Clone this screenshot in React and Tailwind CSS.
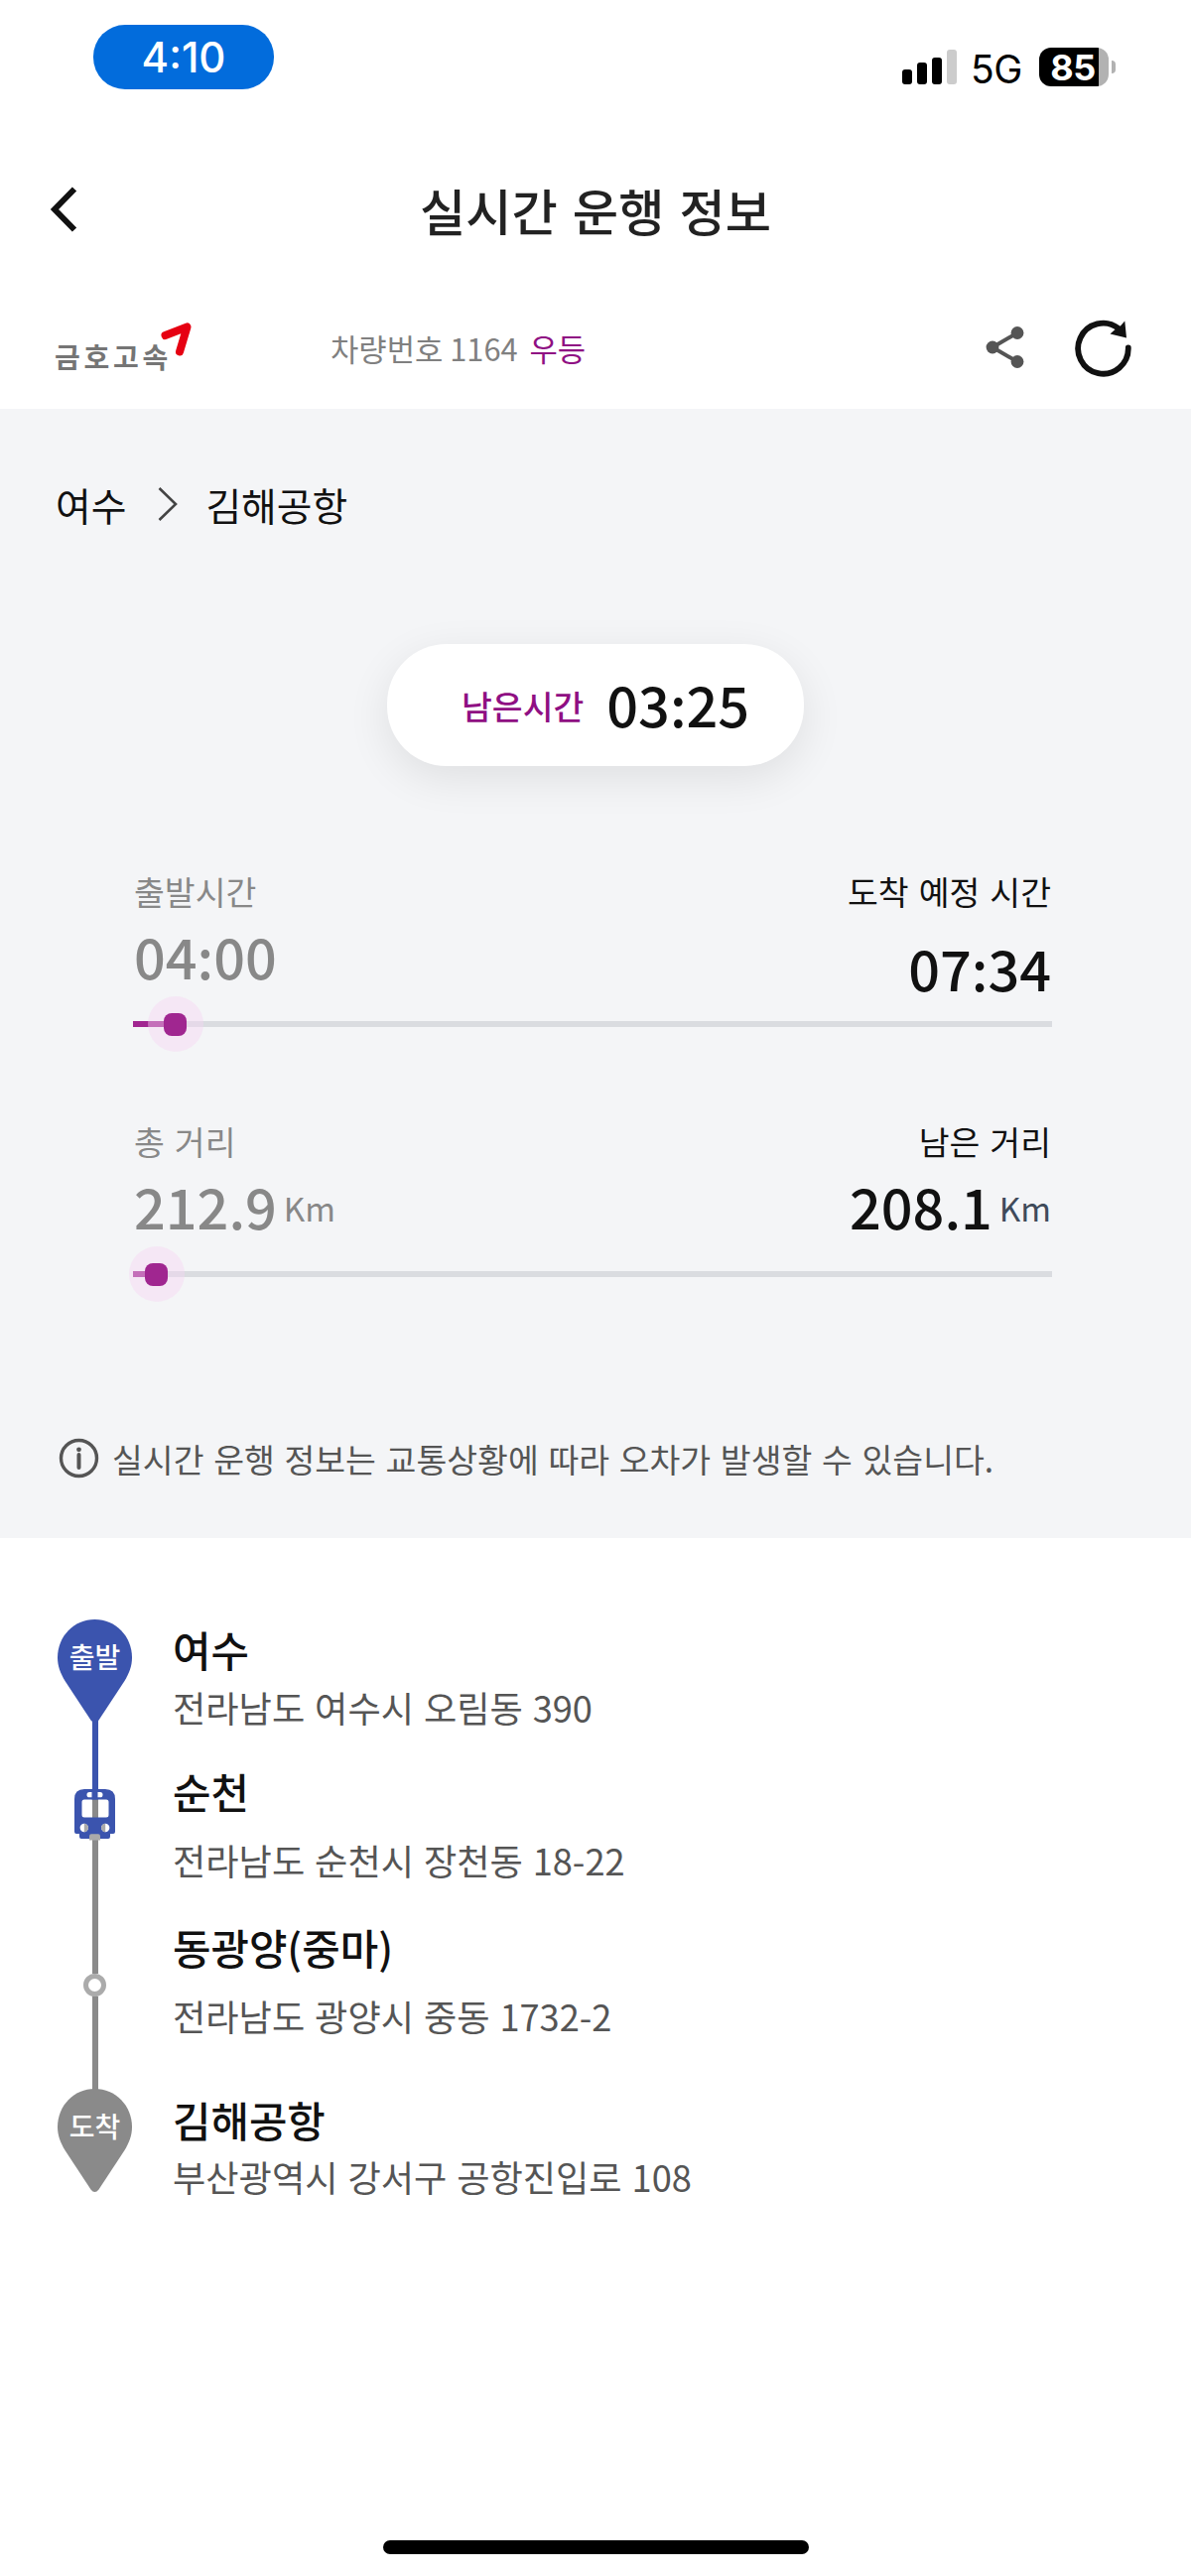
import React from 'react';

const stops = [
  { name: '여수', address: '전라남도 여수시 오림동 390' },
  { name: '순천', address: '전라남도 순천시 장천동 18-22' },
  { name: '동광양(중마)', address: '전라남도 광양시 중동 1732-2' },
  { name: '김해공항', address: '부산광역시 강서구 공항진입로 108' },
];

// Title/address spacing differs between terminals and stops on the way
const stopStyles = [
  'h-[143px] gap-[18px]',
  'h-[157px] gap-[29px]',
  'h-[174px] gap-[29px]',
  'h-[120px] gap-[17px]',
];

function StatusBar() {
  return (
    <div className="flex h-[148px] items-start justify-between pt-[25px] pl-[94px] pr-[76px] font-['Inter',sans-serif]">
      <div className="flex h-[65px] w-[182px] items-center justify-center rounded-[32px] bg-[#026cdc] text-[42px] leading-none font-medium text-white">
        4:10
      </div>
      <div className="mt-[23px] flex h-[39px] items-center">
        <div className="flex h-[37px] items-end gap-[5px] self-start">
          <span className="h-[15px] w-[10px] rounded-[3px] bg-black" />
          <span className="h-[22px] w-[10px] rounded-[3px] bg-black" />
          <span className="h-[27px] w-[10px] rounded-[3px] bg-black" />
          <span className="h-[35px] w-[10px] rounded-[3px] bg-[#cccccc]" />
        </div>
        <span className="mt-[3px] ml-[14px] w-[53px] text-[39px] leading-none tracking-[-0.5px] text-black">5G</span>
        <div className="ml-[16px] flex h-[39px] w-[70px] items-center justify-center rounded-[12px] bg-[linear-gradient(to_right,#000_60px,#b2b2b2_60px)] text-[36px] leading-none font-bold tracking-[-0.5px] text-white">
          <span className="mt-px mr-[2px]">85</span>
        </div>
        <span className="ml-[3px] h-[13px] w-[4px] rounded-r-full bg-[#b2b2b2]" />
      </div>
    </div>
  );
}

function TitleBar() {
  return (
    <div className="grid h-[125px] grid-cols-[1fr_auto_1fr] items-center px-[50px]">
      <button type="button" className="w-fit">
        <svg width="28" height="46" viewBox="0 0 28 46" fill="none" stroke="#111" strokeWidth="6">
          <path d="M25 2.5 L5 23 L25 43.5" />
        </svg>
      </button>
      <h1 className="mt-[2px] text-[50.3px] leading-none font-medium text-[#222] [word-spacing:0.075em]">
        실시간 운행 정보
      </h1>
    </div>
  );
}

function OperatorBar() {
  return (
    <div className="flex h-[139px] items-start pl-[55px] pr-[60px]">
      <div className="mt-[51px] flex items-start">
        <span className="mt-[21px] w-[109px] text-[28px] leading-none font-bold tracking-[3.7px] whitespace-nowrap text-[#757575]">
          금호고속
        </span>
        <svg className="-ml-[3px]" width="34" height="36" viewBox="0 0 34 36" fill="none">
          <path d="M5.5 14 L27.5 5.5 L20 30.5" stroke="#e60012" strokeWidth="8" strokeLinecap="round" strokeLinejoin="round" />
        </svg>
      </div>
      <p className="mt-[62px] ml-[138px] text-[30.8px] leading-[31px] text-[#808080]">
        차량번호 1164 <span className="ml-[5px] text-[#8f0f83]">우등</span>
      </p>
      <div className="mt-[46px] ml-auto flex items-center gap-[49px]">
        <svg width="40" height="44" viewBox="0 0 40 44" fill="#555">
          <path d="M32 7.5 L7 22 L32 36.5" fill="none" stroke="#555" strokeWidth="4" />
          <circle cx="32" cy="7.5" r="6.4" />
          <circle cx="7" cy="22" r="6.4" />
          <circle cx="32" cy="36.5" r="6.4" />
        </svg>
        <svg width="58" height="62" viewBox="0 0 58 62" fill="none">
          <path d="M54.8 31.5 A25.3 25.5 0 1 1 45 12" stroke="#111" strokeWidth="5.8" strokeLinecap="round" />
          <path d="M51.3 4.5 L53 21.5 L36.5 17.5 L41 13.5 L46 10.5 Z" fill="#111" />
        </svg>
      </div>
    </div>
  );
}

function ProgressTrack({ percent }) {
  return (
    <div className="relative h-[6px] bg-[#dadce0]">
      <div className="h-full bg-[#a02690]" style={{ width: `${percent}%` }} />
      <span
        className="absolute top-1/2 flex size-[56px] -translate-x-1/2 -translate-y-1/2 items-center justify-center rounded-full bg-[rgba(246,212,242,0.42)]"
        style={{ left: `${percent}%` }}
      >
        <span className="size-[23px] rounded-[8px] bg-[#a02690]" />
      </span>
    </div>
  );
}

function TripSummary() {
  return (
    <section className="flex h-[1138px] flex-col bg-[#f4f5f7] pt-[76px]">
      <div className="flex h-[40px] items-center pl-[56px] text-[38.8px] leading-none text-[#111]">
        <span>여수</span>
        <svg className="ml-[31px]" width="22" height="34" viewBox="0 0 22 34" fill="none" stroke="#444" strokeWidth="2.6">
          <path d="M2.5 1 L19 17 L2.5 33" />
        </svg>
        <span className="ml-[27px]">김해공항</span>
      </div>

      <div className="mx-auto mt-[121px] flex h-[123px] w-[420px] items-center rounded-[60px] bg-white pl-[75px] leading-none font-medium shadow-[0_12px_44px_rgba(0,0,0,0.09)]">
        <span className="text-[33.5px] text-[#8f0f83]">남은시간</span>
        <span className="mb-[3px] ml-[23px] text-[55.8px] text-[#111]">03:25</span>
      </div>

      <div className="mt-[109px] flex h-[148px] flex-col pr-[141px] pl-[135px] leading-none">
        <div className="flex justify-between">
          <div>
            <p className="text-[33.5px] text-[#888]">출발시간</p>
            <p className="mt-[20px] text-[55.8px] font-medium text-[#888]">04:00</p>
          </div>
          <div className="text-right text-[#111]">
            <p className="text-[33.5px] [word-spacing:0.075em]">도착 예정 시간</p>
            <p className="mt-[32px] text-[55.8px] font-medium">07:34</p>
          </div>
        </div>
      </div>
      <div className="pr-[140px] pl-[134px]">
        <ProgressTrack percent={4.62} />
      </div>

      <div className="mt-[98px] flex h-[148px] flex-col pr-[141px] pl-[135px] leading-none">
        <div className="flex justify-between">
          <div>
            <p className="text-[33.5px] text-[#888] [word-spacing:0.075em]">총 거리</p>
            <p className="mt-[20px] flex items-center text-[55.8px] font-medium text-[#888]">
              212.9<span className="mt-[4px] ml-[7px] text-[33.2px] font-normal">Km</span>
            </p>
          </div>
          <div className="text-right text-[#111]">
            <p className="text-[33.5px] [word-spacing:0.075em]">남은 거리</p>
            <p className="mt-[20px] flex items-center text-[55.8px] font-medium">
              208.1<span className="mt-[4px] ml-[7px] text-[33.2px] font-normal text-[#3f4a5a]">Km</span>
            </p>
          </div>
        </div>
      </div>
      <div className="pr-[140px] pl-[134px]">
        <ProgressTrack percent={2.59} />
      </div>

      <div className="mt-[162px] flex items-start pl-[59px] text-[#555]">
        <svg width="41" height="41" viewBox="0 0 41 41" fill="none" stroke="#555">
          <circle cx="20.5" cy="20.5" r="18" strokeWidth="3.4" />
          <path d="M20.5 17 V30" strokeWidth="4" strokeLinecap="round" />
          <circle cx="20.5" cy="11.8" r="2.4" fill="#555" stroke="none" />
        </svg>
        <p className="mt-[3px] ml-[13px] text-[33.5px] leading-[35px] [word-spacing:0.065em]">
          실시간 운행 정보는 교통상황에 따라 오차가 발생할 수 있습니다.
        </p>
      </div>
    </section>
  );
}

function Pin({ label, className }) {
  return (
    <div className={`relative h-[104px] w-[75px] ${className}`}>
      <svg width="75" height="104" viewBox="0 0 75 104" fill="currentColor">
        <path d="M37.5 0 C58.5 0 75 17 75 38.5 C75 47 72 54.5 67.5 62 L41.5 101.5 Q37.5 106.5 33.5 101.5 L7.5 62 C3 54.5 0 47 0 38.5 C0 17 16.5 0 37.5 0 Z" />
      </svg>
      <span className="absolute inset-x-0 top-[23px] text-center text-[28px] leading-none font-medium text-white">
        {label}
      </span>
    </div>
  );
}

function Train() {
  return (
    <svg className="absolute top-[171px] left-[17px]" width="41" height="52" viewBox="0 0 41 52">
      <path
        fill="#3b54ae"
        fillRule="evenodd"
        d="M10 0 H31 Q41 0 41 10 V43 Q41 45 39 45 H36 V48 Q36 50 34 50 H7 Q5 50 5 48 V45 H2 Q0 45 0 43 V10 Q0 0 10 0 Z M10 10.5 Q7.5 10.5 7.5 13 V26 Q7.5 28.5 10 28.5 H32 Q34.5 28.5 34.5 26 V13 Q34.5 10.5 32 10.5 Z"
      />
      <rect x="12.5" y="3" width="16" height="5.3" rx="2.6" fill="#fff" />
      <rect x="17.5" y="0" width="6" height="10.5" fill="#3b54ae" />
      <circle cx="9.8" cy="39" r="4.2" fill="#fff" />
      <path d="M9.8 34.8 A4.2 4.2 0 0 1 9.8 43.2 Z" fill="#aaa" />
      <circle cx="31.2" cy="39" r="4.2" fill="#fff" />
      <path d="M31.2 34.8 A4.2 4.2 0 0 0 31.2 43.2 Z" fill="#aaa" />
      <path d="M17 45.3 H24 Q26 45.3 26 47.5 V51.5 H15 V47.5 Q15 45.3 17 45.3 Z" fill="#aaa" />
    </svg>
  );
}

function RouteTimeline() {
  return (
    <section className="flex h-[1010px] pt-[82px] pl-[58px]">
      <div className="relative flex w-[75px] flex-col items-center">
        <Pin label="출발" className="text-[#3b54ae]" />
        <span className="-mt-[2px] h-[79px] w-[6px] bg-[#3b54ae]" />
        <span className="h-[176px] w-[6px] bg-[#8a8a8a]" />
        <span className="size-[23px] rounded-full border-[5.5px] border-[#ababab]" />
        <span className="h-[94px] w-[6px] bg-[#8a8a8a]" />
        <Pin label="도착" className="-mt-px text-[#8a8a8a]" />
        <Train />
      </div>
      <ul className="ml-[41px] pt-[10px]">
        {stops.map((stop, i) => (
          <li key={stop.name} className={`flex flex-col leading-none ${stopStyles[i]}`}>
            <p className="text-[41.8px] font-medium text-[#111]">{stop.name}</p>
            <p className="text-[36.2px] text-[#555] [word-spacing:0.05em]">{stop.address}</p>
          </li>
        ))}
      </ul>
    </section>
  );
}

function App() {
  return (
    <div className="flex h-[2596px] w-[1200px] flex-col overflow-hidden bg-white font-['Noto_Sans_CJK_KR',sans-serif]">
      <StatusBar />
      <TitleBar />
      <OperatorBar />
      <TripSummary />
      <RouteTimeline />
      <div className="mx-auto h-[14px] w-[429px] rounded-full bg-black" />
    </div>
  );
}

export default App;
